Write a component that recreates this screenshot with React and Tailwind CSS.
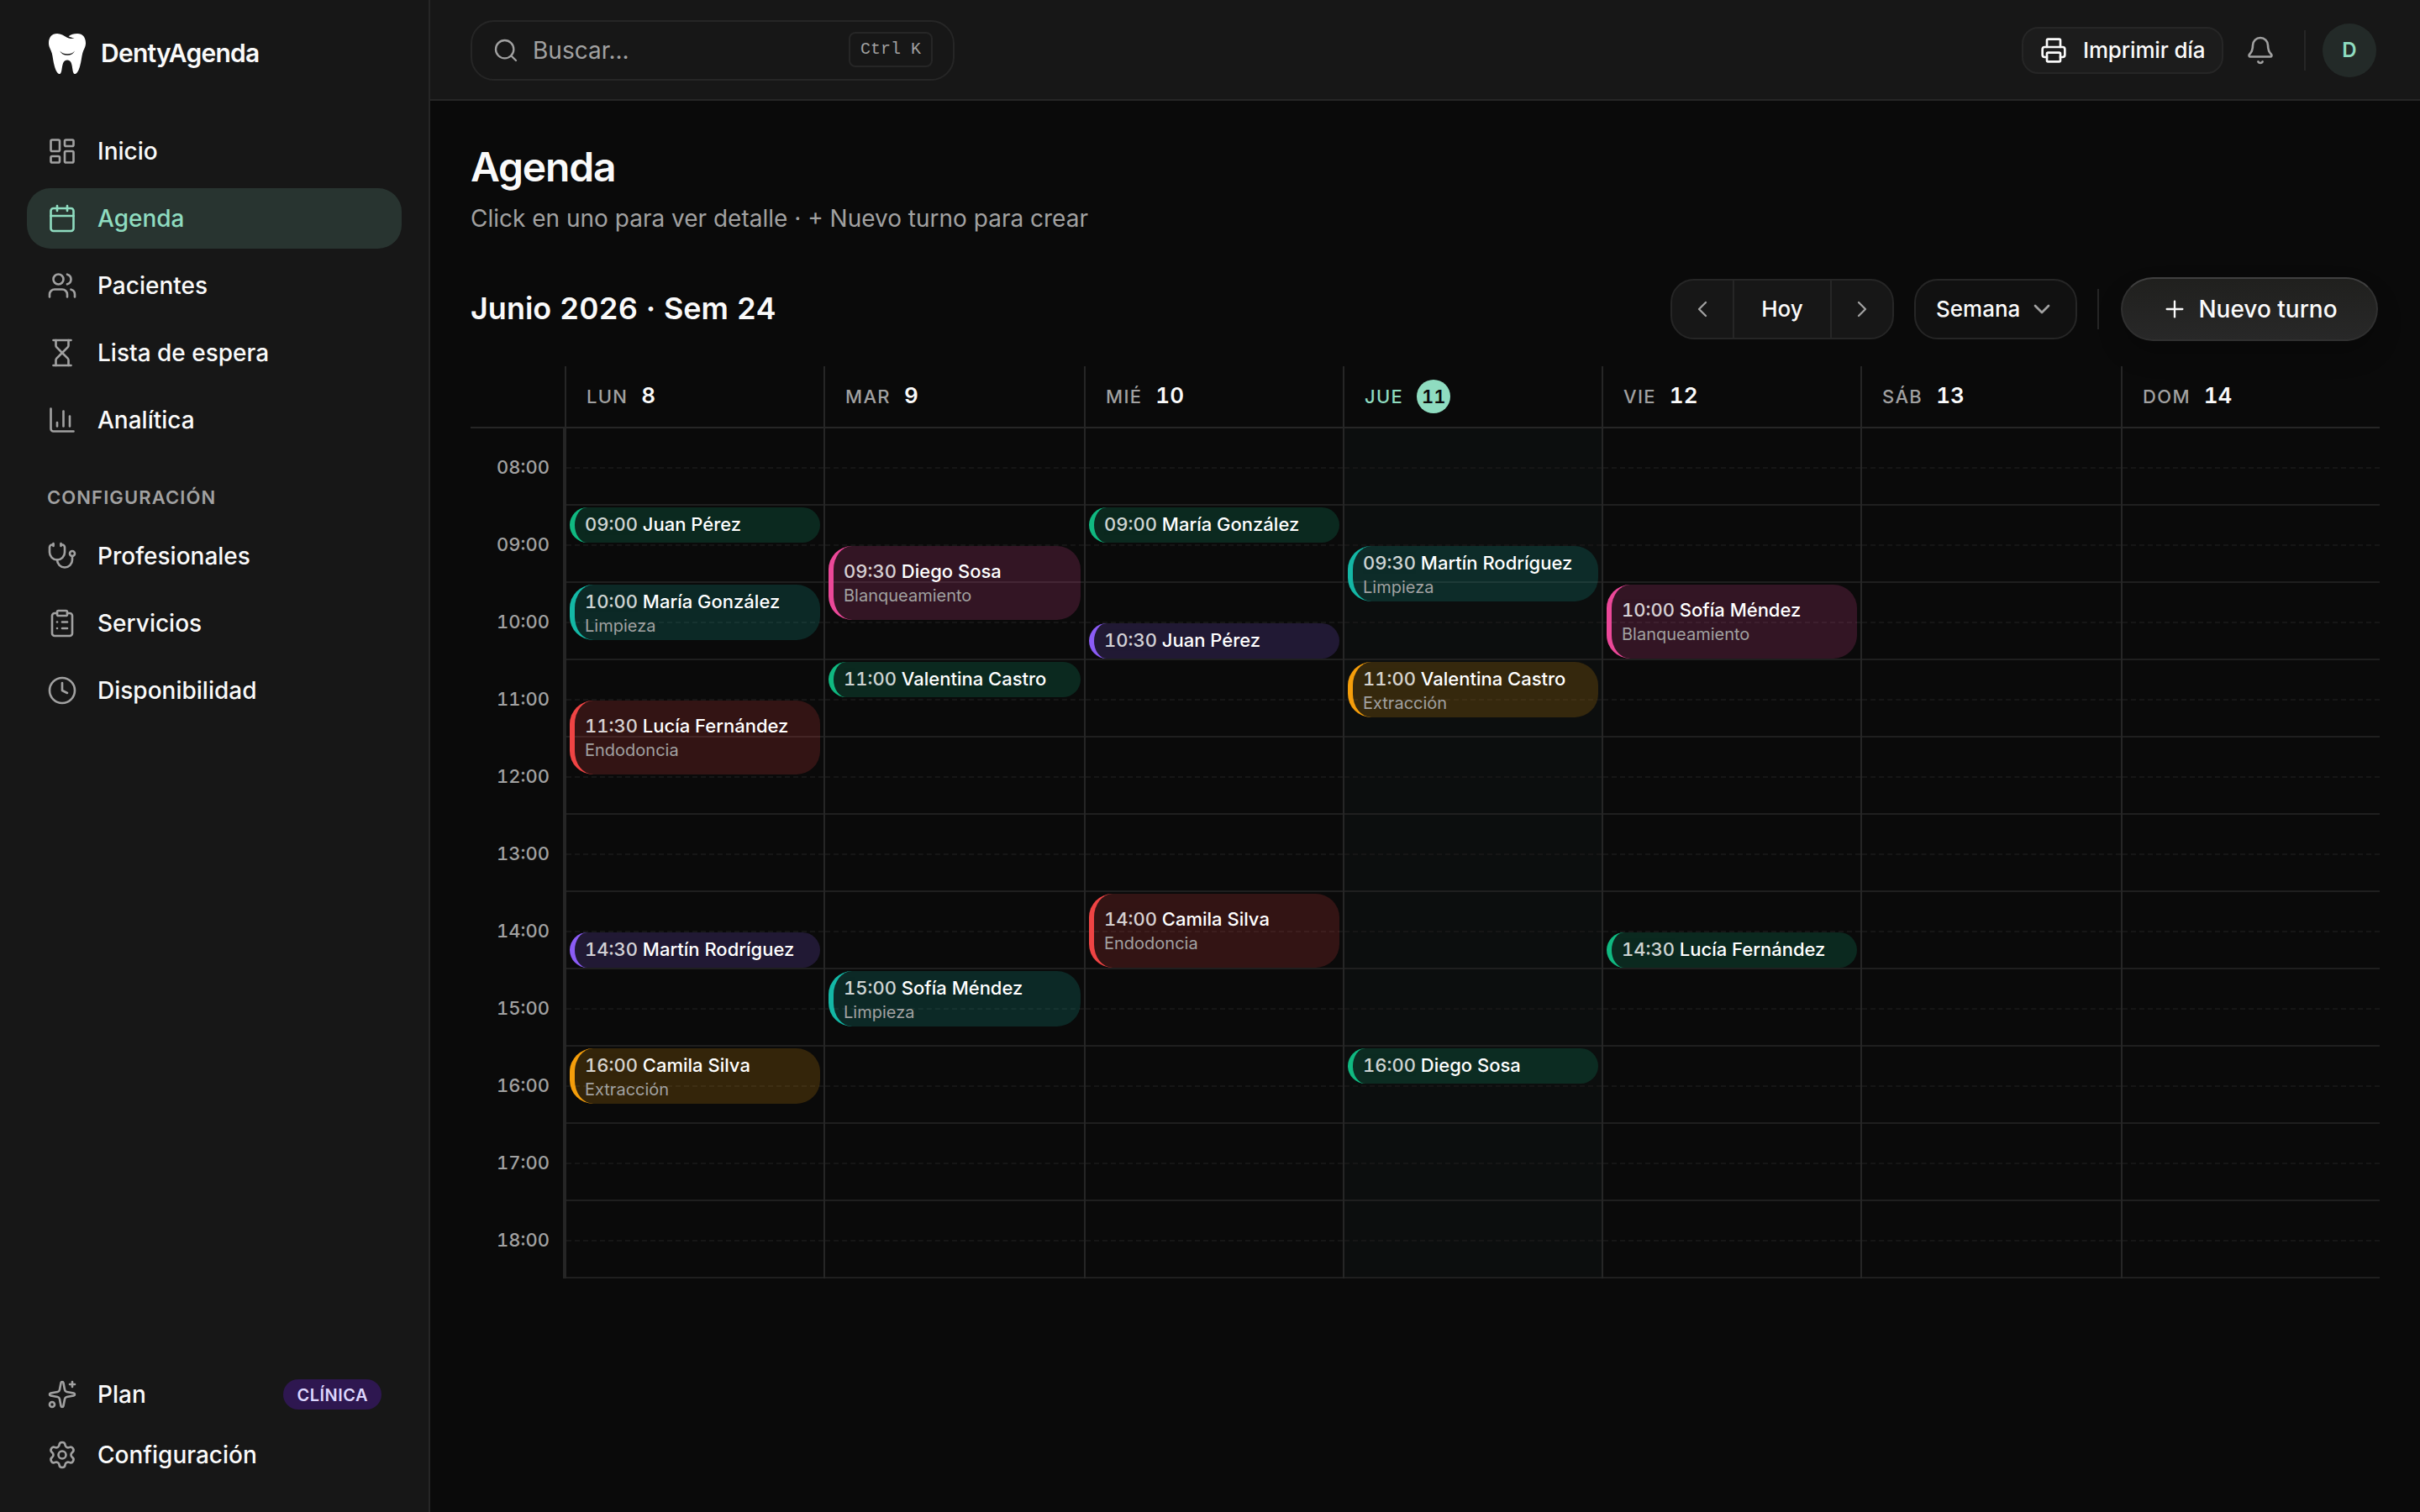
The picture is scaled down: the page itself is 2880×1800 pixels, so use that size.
import {
  Bell,
  Calendar,
  ChartColumn,
  ChevronDown,
  ChevronLeft,
  ChevronRight,
  ClipboardList,
  Clock,
  Hourglass,
  LayoutDashboard,
  Plus,
  Printer,
  Search,
  Settings,
  Sparkles,
  Stethoscope,
  Users,
} from 'lucide-react'
import clsx from 'clsx'

const START_HOUR = 8
const HOUR_HEIGHT = 92

const mainNav = [
  { label: 'Inicio', icon: LayoutDashboard },
  { label: 'Agenda', icon: Calendar, active: true },
  { label: 'Pacientes', icon: Users },
  { label: 'Lista de espera', icon: Hourglass },
  { label: 'Analítica', icon: ChartColumn },
]

const configNav = [
  { label: 'Profesionales', icon: Stethoscope },
  { label: 'Servicios', icon: ClipboardList },
  { label: 'Disponibilidad', icon: Clock },
]

const hours = ['08:00', '09:00', '10:00', '11:00', '12:00', '13:00', '14:00', '15:00', '16:00', '17:00', '18:00']

const services = {
  consulta: { minutes: 30, color: 'border-[#10b981] bg-[#10b981]/18 pb-0.5' },
  control: { minutes: 30, color: 'border-[#8b5cf6] bg-[#8b5cf6]/18 pb-0.5' },
  limpieza: { minutes: 45, name: 'Limpieza', color: 'min-h-[66px] border-[#14b8a6] bg-[#14b8a6]/18 pt-0.5' },
  extraccion: { minutes: 45, name: 'Extracción', color: 'min-h-[66px] border-[#f59e0b] bg-[#f59e0b]/18 pt-0.5' },
  blanqueamiento: { minutes: 60, name: 'Blanqueamiento', color: 'border-[#ec4899] bg-[#ec4899]/18' },
  endodoncia: { minutes: 60, name: 'Endodoncia', color: 'border-[#ef4444] bg-[#ef4444]/18' },
}

const days = [
  {
    name: 'Lun',
    number: 8,
    events: [
      { time: '09:00', patient: 'Juan Pérez', service: 'consulta' },
      { time: '10:00', patient: 'María González', service: 'limpieza' },
      { time: '11:30', patient: 'Lucía Fernández', service: 'endodoncia' },
      { time: '14:30', patient: 'Martín Rodríguez', service: 'control' },
      { time: '16:00', patient: 'Camila Silva', service: 'extraccion' },
    ],
  },
  {
    name: 'Mar',
    number: 9,
    events: [
      { time: '09:30', patient: 'Diego Sosa', service: 'blanqueamiento' },
      { time: '11:00', patient: 'Valentina Castro', service: 'consulta' },
      { time: '15:00', patient: 'Sofía Méndez', service: 'limpieza' },
    ],
  },
  {
    name: 'Mié',
    number: 10,
    events: [
      { time: '09:00', patient: 'María González', service: 'consulta' },
      { time: '10:30', patient: 'Juan Pérez', service: 'control' },
      { time: '14:00', patient: 'Camila Silva', service: 'endodoncia' },
    ],
  },
  {
    name: 'Jue',
    number: 11,
    today: true,
    events: [
      { time: '09:30', patient: 'Martín Rodríguez', service: 'limpieza' },
      { time: '11:00', patient: 'Valentina Castro', service: 'extraccion' },
      { time: '16:00', patient: 'Diego Sosa', service: 'consulta' },
    ],
  },
  {
    name: 'Vie',
    number: 12,
    events: [
      { time: '10:00', patient: 'Sofía Méndez', service: 'blanqueamiento' },
      { time: '14:30', patient: 'Lucía Fernández', service: 'consulta' },
    ],
  },
  { name: 'Sáb', number: 13, events: [] },
  { name: 'Dom', number: 14, events: [] },
]

function ToothLogo() {
  return (
    <svg viewBox="0 0 48 48" className="size-12" fill="none">
      <path
        d="M23.4 4.6C20.4 2.6 16.4 0 12 0C5.6 0 2 4.6 2 11.2C2 16 4.4 18.4 5.8 23.4C7 28 7.2 33 8.8 38.6C10 43 12 48 14.6 48C19.6 48 15.6 31.4 24 31.4C32.4 31.4 28.4 48 33.4 48C36 48 38 43 39.2 38.6C40.8 33 41 28 42.2 23.4C43.6 18.4 46 16 46 11.2C46 4.6 42.4 0 36 0C31.6 0 28.6 1.2 25.6 3.2C27.6 4.4 29.6 5 32.6 5C29 6.6 26.4 6.2 23.4 4.6Z"
        fill="#fff"
      />
      <path d="M15.2 20.4C17.6 23 20.4 24.2 24.2 24.2C28 24.2 30.8 23 33 20.4C31.4 24 28.4 25.8 24.2 25.8C19.8 25.8 16.8 24 15.2 20.4Z" fill="#171717" />
    </svg>
  )
}

function NavItem({ label, icon: Icon, active, children }) {
  return (
    <a
      className={clsx(
        'flex h-18 items-center gap-6 rounded-[28px] px-6 text-[28px] font-medium',
        active ? 'bg-[#8fdcc0]/15 text-[#8fdcc0]' : 'text-[#fafafa]',
      )}
    >
      <Icon size={36} strokeWidth={1.75} className={active ? 'text-[#8fdcc0]' : 'text-[#a1a1a1]'} />
      <span className="flex-1">{label}</span>
      {children}
    </a>
  )
}

function Sidebar() {
  return (
    <aside className="flex w-[512px] shrink-0 flex-col border-r-2 border-[#262626] bg-[#171717] px-8">
      <div className="flex h-32 items-center gap-4 px-6">
        <ToothLogo />
        <span className="pb-0.5 text-[30px] font-semibold tracking-tight text-[#fafafa]">DentyAgenda</span>
      </div>
      <nav className="flex flex-col gap-2 pt-4">
        {mainNav.map((item) => (
          <NavItem key={item.label} {...item} />
        ))}
      </nav>
      <p className="px-6 pt-[39px] pb-[17px] text-[22px] leading-[34px] font-semibold tracking-wider text-[#a1a1a1] uppercase">Configuración</p>
      <nav className="flex flex-col gap-2">
        {configNav.map((item) => (
          <NavItem key={item.label} {...item} />
        ))}
      </nav>
      <div className="mt-auto flex flex-col pb-8">
        <NavItem label="Plan" icon={Sparkles}>
          <span className="flex h-9 items-center rounded-full bg-[#2e1750] px-4 pt-0.5 text-[20px] font-semibold tracking-wide text-[#ddd6fe]">CLÍNICA</span>
        </NavItem>
        <NavItem label="Configuración" icon={Settings} />
      </div>
    </aside>
  )
}

function TopBar() {
  return (
    <header className="flex h-[120px] items-center border-b-2 border-[#262626] bg-[#171717] pt-0.5 pr-[52px] pl-12">
      <div className="flex h-18 w-[576px] items-center gap-4 rounded-[28px] border-2 border-[#262626] px-6 text-[#a1a1a1]">
        <Search size={32} strokeWidth={1.75} />
        <span className="flex-1 text-[28px]">Buscar...</span>
        <kbd className="mb-0.5 flex h-[42px] items-center rounded-lg border-2 border-[#262626] px-3 font-['Liberation_Mono',monospace] text-[20px]">
          Ctrl K
        </kbd>
      </div>
      <div className="ml-auto flex items-center">
        <button className="flex h-14 w-60 items-center gap-[19px] rounded-[20px] border-2 border-[#262626] bg-[#1c1c1c] pl-5 text-[26px] font-medium text-[#fafafa]">
          <Printer size={32} />
          <span className="pb-0.5 tracking-[-0.006em]">Imprimir día</span>
        </button>
        <button className="ml-4 flex size-14 items-center justify-center text-[#a1a1a1]">
          <Bell size={36} strokeWidth={1.75} />
        </button>
        <div className="mr-5 ml-6 h-12 w-0.5 bg-[#262626]" />
        <div className="flex size-16 items-center justify-center rounded-full bg-[#8fdcc0]/10 text-[24px] font-semibold text-[#8fdcc0]">D</div>
      </div>
    </header>
  )
}

function Toolbar() {
  return (
    <div className="flex h-[76px] items-center">
      <h2 className="pb-0.5 text-[36px] font-semibold text-[#fafafa] tabular-nums">Junio 2026 · Sem 24</h2>
      <div className="ml-auto flex items-center">
        <div className="flex h-18 overflow-hidden rounded-[28px] border-2 border-[#262626] bg-[#171717] text-[#fafafa]">
          <button className="flex w-18 items-center justify-center text-[#a1a1a1]">
            <ChevronLeft size={32} strokeWidth={1.75} />
          </button>
          <button className="w-[118px] border-x-2 border-[#262626] pb-0.5 text-[26px] font-medium">Hoy</button>
          <button className="flex w-18 items-center justify-center text-[#a1a1a1]">
            <ChevronRight size={32} strokeWidth={1.75} />
          </button>
        </div>
        <button className="ml-6 flex h-18 w-[194px] items-center justify-between rounded-[28px] border-2 border-[#262626] bg-[#111] px-6 text-[26px] font-medium text-[#fafafa]">
          <span className="pb-0.5">Semana</span>
          <ChevronDown size={32} className="text-[#a1a1a1]" />
        </button>
        <div className="mr-[26px] ml-6 h-12 w-0.5 bg-[#262626]" />
        <button className="mr-0.5 flex h-[76px] w-[306px] items-center justify-center gap-3 rounded-full border-2 border-[#303030] border-t-[#404040] bg-linear-to-b from-[#20201e] to-[#282828] text-[28px] font-medium text-[#fafafa] shadow-[0_16px_32px_-4px_rgba(0,0,0,0.25)]">
          <Plus size={32} strokeWidth={1.75} />
          Nuevo turno
        </button>
      </div>
    </div>
  )
}

function Event({ time, patient, service }) {
  const { minutes, name, color } = services[service]
  const [h, m] = time.split(':').map(Number)
  const top = (h + m / 60 - START_HOUR) * HOUR_HEIGHT + 2
  const height = (minutes / 60) * HOUR_HEIGHT - 4

  return (
    <div
      className={clsx(
        'absolute inset-x-1 flex flex-col justify-center overflow-hidden rounded-[28px] border-l-6 px-3 whitespace-nowrap',
        color,
      )}
      style={{ top, height }}
    >
      <p className="text-[22px] leading-[31px] font-medium text-white">
        <span className="tabular-nums opacity-80">{time}</span> {patient}
      </p>
      {name && <p className="text-[20px] leading-[27px] text-[#a1a1a1]">{name}</p>}
    </div>
  )
}

function WeekGrid() {
  return (
    <div className="mt-[30px]">
      <div className="grid h-[74px] grid-cols-[112px_308px_310px_308px_308px_308px_310px_308px] border-b-2 border-[#262626]">
        <div />
        {days.map((day) => (
          <div key={day.name} className="flex items-center gap-4 border-l-2 border-[#262626] px-6">
            <span
              className={clsx('text-[22px] font-medium tracking-[0.06em] uppercase', day.today ? 'text-[#8fdcc0]' : 'text-[#a1a1a1]')}
            >
              {day.name}
            </span>
            {day.today ? (
              <span className="flex size-10 items-center justify-center rounded-full bg-[#8fdcc0] text-[22px] font-semibold text-[#0a0a0a] tabular-nums">
                {day.number}
              </span>
            ) : (
              <span className="pb-1 text-[26px] font-semibold text-[#fafafa] tabular-nums">{day.number}</span>
            )}
          </div>
        ))}
      </div>
      <div className="grid grid-cols-[112px_308px_310px_308px_308px_308px_310px_308px]">
        <div className="border-r-2 border-[#262626]">
          {hours.map((hour) => (
            <div key={hour} className="flex h-[92px] items-center justify-end pr-4 text-[22px] font-medium text-[#a1a1a1] tabular-nums">
              {hour}
            </div>
          ))}
        </div>
        {days.map((day) => (
          <div key={day.name} className={clsx('relative border-l-2 border-[#262626]', day.today && 'bg-[#8fdcc0]/[0.025]')}>
            {hours.map((hour) => (
              <div key={hour} className="h-[92px] border-b-2 border-[#1f1f1f]">
                <div className="h-12 border-b-2 border-dashed border-[#161616]" />
              </div>
            ))}
            {day.events.map((event) => (
              <Event key={event.time} {...event} />
            ))}
          </div>
        ))}
      </div>
    </div>
  )
}

export default function App() {
  return (
    <div className="flex h-[1800px] w-[2880px] overflow-hidden bg-[#0a0a0a] font-['Inter',sans-serif]">
      <Sidebar />
      <div className="flex flex-1 flex-col">
        <TopBar />
        <main className="flex-1 px-12 pt-12">
          <h1 className="pt-px text-[48px] leading-[60px] font-semibold tracking-tight text-[#fafafa]">Agenda</h1>
          <p className="mt-[11px] mb-[50px] text-[28px] leading-10 text-[#a1a1a1]">Click en uno para ver detalle · + Nuevo turno para crear</p>
          <Toolbar />
          <WeekGrid />
        </main>
      </div>
    </div>
  )
}
